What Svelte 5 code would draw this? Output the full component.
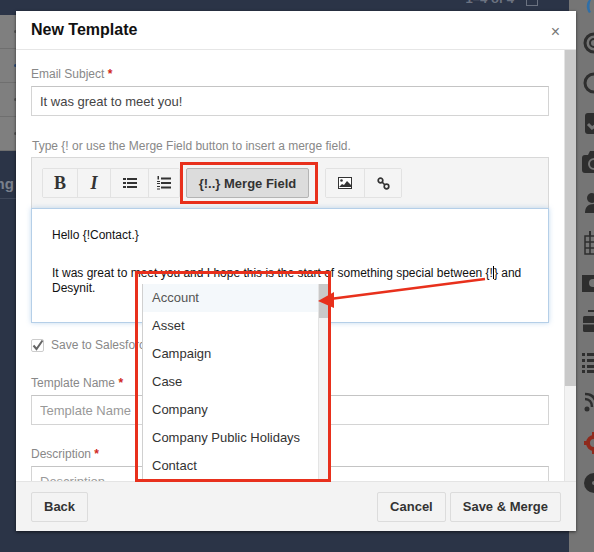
<script>
	const mergeFields = ['Account', 'Asset', 'Campaign', 'Case', 'Company', 'Company Public Holidays', 'Contact'];
</script>

<div class="page">
	<div class="content">
		<div class="topbar">
			<span class="pager">1–4 of 4</span>
			<span class="pager-btn"></span>
		</div>
		<div class="rows">
			<div class="row"><i></i></div>
			<div class="row"><i class="blue"></i></div>
			<div class="row"><i></i></div>
			<div class="row"><i></i></div>
		</div>
		<div class="section-title">Marketing</div>
	</div>

	<aside class="sidebar">
		<svg width="25" height="552" viewBox="569 0 25 552" fill="#2e2e2e">
			<path d="M589 0c-3 3-3 9 0 13l2-1c-2-3-2-8 0-12z" fill="#2f6fa8" />
			<circle cx="594" cy="43" r="9" fill="none" stroke="#2e2e2e" stroke-width="3" />
			<circle cx="594" cy="43" r="4" fill="none" stroke="#2e2e2e" stroke-width="2" />
			<circle cx="594" cy="83" r="9" fill="none" stroke="#2e2e2e" stroke-width="3" />
			<path d="M588 113h8v21h-8a3 3 0 0 1-3-3v-15a3 3 0 0 1 3-3z" />
			<path d="M588 124l4 4 3-2" fill="none" stroke="#757575" stroke-width="3" />
			<path d="M590 151h4v22h-9a3 3 0 0 1-3-3v-12a3 3 0 0 1 3-3h3z" />
			<circle cx="594" cy="164" r="5" fill="none" stroke="#757575" stroke-width="2" />
			<circle cx="592" cy="198" r="5" />
			<path d="M585 213c0-6 3-9 9-9v9z" />
			<g fill="none" stroke="#2e2e2e" stroke-width="1.5">
				<rect x="585" y="236" width="10" height="18" />
				<path d="M585 242h10M585 248h10M590 236v18" />
			</g>
			<rect x="589" y="231" width="2" height="5" />
			<rect x="582" y="275" width="14" height="17" />
			<circle cx="593" cy="283" r="4" fill="#757575" />
			<rect x="583" y="316" width="12" height="16" rx="1.5" />
			<rect x="588" y="310" width="7" height="2" />
			<rect x="583" y="323" width="12" height="1.5" fill="#757575" />
			<g>
				<rect x="582" y="353" width="3" height="3" /><rect x="587" y="353" width="8" height="3" />
				<rect x="582" y="359" width="3" height="3" /><rect x="587" y="359" width="8" height="3" />
				<rect x="582" y="365" width="3" height="3" /><rect x="587" y="365" width="8" height="3" />
				<rect x="582" y="370" width="3" height="3" /><rect x="587" y="370" width="8" height="3" />
			</g>
			<circle cx="587" cy="409" r="2.5" />
			<path d="M585 394c7 0 11 4 11 12M585 399c4 0 7 3 7 8" fill="none" stroke="#2e2e2e" stroke-width="2.5" />
			<circle cx="594" cy="443" r="6" fill="none" stroke="#8f2a1c" stroke-width="4" />
			<path d="M592 432h4v4h-4zM592 450h4v4h-4zM584 441h4v4h-4z" fill="#8f2a1c" />
			<circle cx="594" cy="483" r="10" />
			<circle cx="594" cy="483" r="2" fill="#757575" />
		</svg>
	</aside>

	<div class="modal">
		<header class="modal-header">
			<h2>New Template</h2>
			<span class="close">×</span>
		</header>

		<div class="modal-main">
			<div class="modal-body">
				<label for="subject">Email Subject <em>*</em></label>
				<input id="subject" type="text" value="It was great to meet you!" />

				<p class="hint">Type {'{!'} or use the Merge Field button to insert a merge field.</p>
				<div class="toolbar">
					<div class="btn-group">
						<button class="tool bold">B</button>
						<button class="tool italic">I</button>
						<button class="tool list" aria-label="Bullet list">
							<svg width="14" height="11" viewBox="0 0 14 11" fill="#333">
								<rect y="0" width="3" height="2" /><rect x="4" y="0" width="10" height="2" />
								<rect y="4" width="3" height="2" /><rect x="4" y="4" width="10" height="2" />
								<rect y="8" width="3" height="2" /><rect x="4" y="8" width="10" height="2" />
							</svg>
						</button>
						<button class="tool olist" aria-label="Numbered list">
							<svg width="14" height="14" viewBox="0 0 14 14" fill="#333">
								<rect x="0.5" y="0" width="1.5" height="3.5" />
								<rect y="5" width="3" height="1" /><rect x="0" y="7" width="3" height="1" />
								<rect y="10" width="3" height="1" /><rect y="12.5" width="3" height="1" />
								<rect x="4" y="1.5" width="10" height="2" />
								<rect x="4" y="6" width="10" height="2" />
								<rect x="4" y="10.5" width="10" height="2" />
							</svg>
						</button>
					</div>
					<button class="merge">{'{!..}'} Merge Field</button>
					<div class="btn-group">
						<button class="tool image" aria-label="Image">
							<svg width="14" height="12" viewBox="0 0 14 12">
								<rect x="0.5" y="0.5" width="13" height="11" fill="#fff" stroke="#333" />
								<circle cx="3.5" cy="3.5" r="1.3" fill="#333" />
								<path d="M1 10l3-3 2 1 3-4 4 4v2z" fill="#333" />
							</svg>
						</button>
						<button class="tool link" aria-label="Link">
							<svg width="13" height="13" viewBox="0 0 13 13" fill="none" stroke="#333" stroke-width="1.7">
								<circle cx="3.5" cy="3.5" r="2.3" />
								<circle cx="9.5" cy="9.5" r="2.3" />
								<path d="M5 5l3 3" />
							</svg>
						</button>
					</div>
				</div>
				<div class="editor">
					<p>Hello {'{!Contact.}'}</p>
					<p>It was great to meet you and I hope this is the start of something special between {'{!'}<span class="caret"></span>{'}'} and Desynit.</p>
				</div>

				<div class="check-row">
					<span class="checkbox">
						<svg width="13" height="13" viewBox="0 0 13 13">
							<path d="M2.5 6.5l3 3.5 6-8.5" fill="none" stroke="#666" stroke-width="2" />
						</svg>
					</span>
					<span>Save to Salesforce</span>
				</div>

				<label for="template-name">Template Name <em>*</em></label>
				<input id="template-name" type="text" placeholder="Template Name" />

				<label class="desc-label" for="description">Description <em>*</em></label>
				<input id="description" type="text" placeholder="Description" />
			</div>
			<div class="scrollbar"><div class="thumb body-thumb"></div></div>
		</div>

		<footer class="modal-footer">
			<button class="btn">Back</button>
			<button class="btn cancel">Cancel</button>
			<button class="btn">Save &amp; Merge</button>
		</footer>

		<div class="dropdown">
			<ul>
				{#each mergeFields as field, i}
					<li class:active={i === 0}>{field}</li>
				{/each}
			</ul>
			<div class="scrollbar small"><div class="thumb"></div></div>
		</div>
	</div>

	<svg class="annotations" width="594" height="552" viewBox="0 0 594 552">
		<g fill="none" stroke="#e8301c" stroke-width="3">
			<rect x="181.5" y="163.5" width="135" height="39" />
			<rect x="136.5" y="272.5" width="193" height="208" />
			<path d="M485 279L330 299" stroke-width="2.5" />
		</g>
		<path d="M318 301L334 292L334 308Z" fill="#e8301c" />
	</svg>
</div>

<style>
	:global(body) {
		margin: 0;
		font-family: 'Liberation Sans', Arial, sans-serif;
	}

	.page {
		position: relative;
		display: flex;
		width: 594px;
		height: 552px;
		overflow: hidden;
		background: #2b3447;
	}

	.content {
		flex: 1;
		min-width: 0;
		display: flex;
		flex-direction: column;
	}

	.topbar {
		display: flex;
		justify-content: flex-end;
		align-items: flex-end;
		gap: 12px;
		height: 15px;
		padding-right: 31px;
		overflow: hidden;
	}

	.pager {
		margin-bottom: 9px;
		font-size: 13px;
		font-weight: bold;
		color: #6b7280;
	}

	.pager-btn {
		width: 10px;
		height: 10px;
		margin-bottom: 9px;
		border: 1px solid #6b7280;
	}

	.rows {
		height: 136px;
		background: #7f7f7f;
	}

	.row {
		box-sizing: border-box;
		display: flex;
		align-items: center;
		height: 34px;
		padding-left: 14px;
		border-bottom: 1px solid #6f6f6f;
	}

	.row i {
		width: 3px;
		height: 3px;
		border-radius: 50%;
		background: #555;
	}

	.row i.blue {
		background: #2c4a78;
	}

	.section-title {
		margin-top: 24px;
		margin-left: -57px;
		padding-bottom: 6px;
		font-size: 15px;
		font-weight: bold;
		color: #7a808c;
		border-bottom: 1px solid #3f485a;
	}

	.sidebar {
		flex: none;
		width: 25px;
		background: #757575;
	}

	.sidebar svg {
		display: block;
	}

	.modal {
		position: absolute;
		left: 16px;
		top: 11px;
		width: 560px;
		height: 520px;
		display: flex;
		flex-direction: column;
		background: #fff;
		box-shadow: 0 1px 3px rgba(0, 0, 0, 0.6);
	}

	.modal-header {
		display: flex;
		justify-content: space-between;
		align-items: center;
		height: 38px;
		padding: 0 15px;
		border-bottom: 1px solid #e6e6e6;
		flex: none;
	}

	h2 {
		margin: 0;
		font-size: 16px;
		font-weight: bold;
		color: #111;
	}

	.close {
		padding-top: 3px;
		margin-right: 1px;
		font-size: 16px;
		color: #777;
	}

	.modal-main {
		flex: 1;
		display: flex;
		min-height: 0;
	}

	.modal-body {
		flex: 1;
		min-width: 0;
		padding: 17px 15px 0;
		overflow: hidden;
	}

	label,
	.hint,
	.check-row {
		font-size: 12px;
		color: #888;
	}

	label {
		display: block;
		height: 19px;
		line-height: 14px;
	}

	em {
		font-style: normal;
		font-weight: bold;
		color: #d0281c;
	}

	input {
		display: block;
		box-sizing: border-box;
		width: 100%;
		height: 30px;
		margin: 0;
		padding: 0 8px;
		font-family: inherit;
		font-size: 13px;
		color: #444;
		background: #fff;
		border: 1px solid #d4d4d4;
		border-top-color: #c4c4c4;
		border-radius: 0;
		outline: none;
	}

	input::placeholder {
		color: #999;
	}

	.hint {
		margin: 23px 0 4px 1px;
		line-height: 14px;
	}

	.toolbar {
		box-sizing: border-box;
		display: flex;
		gap: 6px;
		height: 51px;
		padding: 10px;
		background: #f4f4f4;
		border: 1px solid #d8d8d8;
		border-bottom: none;
	}

	.btn-group {
		display: flex;
		height: 30px;
		border: 1px solid #e2e2e2;
		border-radius: 2px;
		box-sizing: border-box;
	}

	.btn-group:last-child {
		margin-left: 10px;
	}

	.tool {
		display: flex;
		align-items: center;
		justify-content: center;
		padding: 0;
		background: #f4f4f4;
		border: none;
		border-right: 1px solid #e2e2e2;
		color: #333;
	}

	.tool:last-child {
		border-right: none;
	}

	.bold,
	.italic {
		font-family: 'Liberation Serif', serif;
		font-size: 18px;
		font-weight: bold;
	}

	.bold {
		width: 35px;
	}

	.italic {
		width: 33px;
		font-style: italic;
	}

	.list {
		width: 38px;
	}

	.olist {
		width: 30px;
	}

	.image {
		width: 39px;
	}

	.link {
		width: 36px;
	}

	.merge {
		box-sizing: border-box;
		width: 123px;
		height: 30px;
		padding: 0;
		font-family: inherit;
		font-size: 13px;
		font-weight: bold;
		color: #333;
		background: #dcdcdc;
		border: 1px solid #b4b4b4;
		border-radius: 2px;
	}

	.editor {
		box-sizing: border-box;
		height: 115px;
		padding: 19px 20px;
		font-size: 12px;
		line-height: 15px;
		color: #111;
		background: #fff;
		border: 1px solid #b5cfe8;
		box-shadow: 0 0 5px rgba(120, 170, 220, 0.45);
	}

	.editor p {
		margin: 0 0 23px;
	}

	.caret {
		display: inline-block;
		width: 1px;
		height: 13px;
		margin-bottom: -2px;
		background: #000;
	}

	.check-row {
		display: flex;
		align-items: center;
		gap: 7px;
		height: 14px;
		margin: 15px 0 24px;
	}

	.checkbox {
		box-sizing: border-box;
		width: 13px;
		height: 13px;
		background: #fff;
		border: 1px solid #ccc;
		border-radius: 2px;
	}

	.checkbox svg {
		display: block;
		margin: -1px;
	}

	.desc-label {
		margin-top: 22px;
	}

	.scrollbar {
		flex: none;
		width: 12px;
		background: #f3f3f3;
		border-left: 1px solid #e4e4e4;
		box-sizing: border-box;
	}

	.thumb {
		background: #c9c9c9;
	}

	.body-thumb {
		height: 336px;
	}

	.modal-footer {
		flex: none;
		display: flex;
		gap: 4px;
		align-items: center;
		height: 50px;
		box-sizing: border-box;
		padding: 0 15px;
		background: #f3f3f3;
		border-top: 1px solid #e4e4e4;
	}

	.btn {
		box-sizing: border-box;
		height: 30px;
		padding: 0 12px;
		font-family: inherit;
		font-size: 13px;
		font-weight: bold;
		color: #333;
		background: #f3f3f3;
		border: 1px solid #dcdcdc;
		border-radius: 2px;
	}

	.cancel {
		margin-left: auto;
	}

	.dropdown {
		position: absolute;
		left: 126px;
		top: 273px;
		display: flex;
		width: 187px;
		height: 197px;
		background: #fff;
		border-left: 1px solid #d0d0d0;
		overflow: hidden;
	}

	.dropdown ul {
		flex: 1;
		margin: 0;
		padding: 0;
		list-style: none;
	}

	.dropdown li {
		height: 28px;
		padding-left: 9px;
		font-size: 13px;
		line-height: 28px;
		color: #333;
	}

	.dropdown li.active {
		background: #f4f8fb;
		color: #555;
	}

	.small .thumb {
		height: 34px;
	}

	.annotations {
		position: absolute;
		left: 0;
		top: 0;
		pointer-events: none;
	}
</style>
